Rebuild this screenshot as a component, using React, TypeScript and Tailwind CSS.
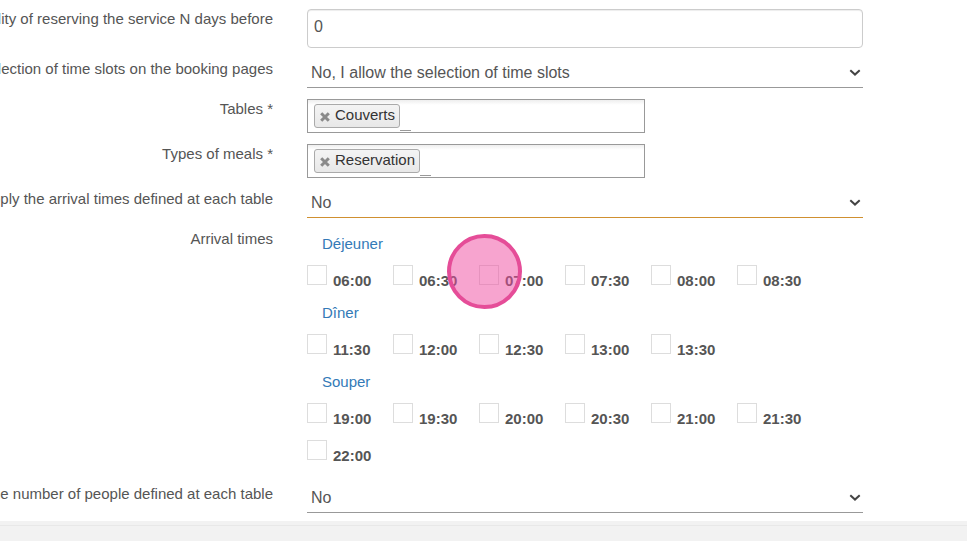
import { useId, type ReactNode } from "react";
import { clsx } from "clsx";

const MEALS = [
  { name: "Déjeuner", times: ["06:00", "06:30", "07:00", "07:30", "08:00", "08:30"] },
  { name: "Dîner", times: ["11:30", "12:00", "12:30", "13:00", "13:30"] },
  { name: "Souper", times: ["19:00", "19:30", "20:00", "20:30", "21:00", "21:30", "22:00"] },
];

const POINTER_TIME = "07:00";

interface RowProps {
  label: string;
  htmlFor?: string;
  children: ReactNode;
}

function Row({ label, htmlFor, children }: RowProps) {
  return (
    <div className="flex items-start gap-[34px]">
      <div className="flex w-[273px] shrink-0 justify-end overflow-hidden pt-px">
        <label htmlFor={htmlFor} className="shrink-0 whitespace-nowrap">
          {label}
        </label>
      </div>
      <div className="min-w-0 flex-1">{children}</div>
    </div>
  );
}

interface SelectRowProps {
  label: string;
  options: string[];
  highlighted?: boolean;
}

function SelectRow({ label, options, highlighted = false }: SelectRowProps) {
  const id = useId();

  return (
    <Row label={label} htmlFor={id}>
      <div className="relative">
        <select
          id={id}
          className="block h-[29px] w-full appearance-none bg-white px-1 text-base leading-5 outline-none"
        >
          {options.map((option) => (
            <option key={option}>{option}</option>
          ))}
        </select>
        <div className={clsx("h-px", highlighted ? "bg-[#d09030]" : "bg-[#999]")} />
        <svg
          viewBox="0 0 12 8"
          className="pointer-events-none absolute top-[11px] right-0.5 h-2 w-3"
          fill="none"
          stroke="#444"
          strokeWidth="2"
          aria-hidden="true"
        >
          <path d="M1.3 1.3 6 5.6l4.7-4.3" />
        </svg>
      </div>
    </Row>
  );
}

function TagRow({ label, tag }: { label: string; tag: string }) {
  const id = useId();

  return (
    <Row label={label} htmlFor={id}>
      <div className="mt-px flex h-[34px] w-[338px] items-start border border-[#999] bg-linear-to-b from-[#eee] to-white to-15% px-1.5 pt-1">
        <span className="flex h-6 items-center rounded-[3px] border border-[#aaa] bg-linear-to-b from-[#f4f4f4] to-[#e8e8e8] pr-1 pb-[3px] pl-[5px] text-[#333]">
          <button type="button" aria-label={`Remove ${tag}`} className="mt-1 mr-[5px]">
            <svg viewBox="0 0 10 10" className="size-2.5" stroke="#8a8a8a" strokeWidth="3" aria-hidden="true">
              <path d="m1.2 1.2 7.6 7.6M8.8 1.2 1.2 8.8" />
            </svg>
          </button>
          {tag}
        </span>
        <input id={id} type="text" className="h-[27px] w-[11px] border-b border-[#999] bg-transparent outline-none" />
      </div>
    </Row>
  );
}

function TimeOption({ meal, time }: { meal: string; time: string }) {
  return (
    <label className="relative flex h-[37px] w-[86px] items-start gap-1.5 pt-[5px] font-bold">
      <input
        type="checkbox"
        name={meal}
        value={time}
        className="size-5 shrink-0 appearance-none border border-[#ddd] bg-white checked:bg-[#337ab7]"
      />
      <span className="mt-1.5">{time}</span>
      {time === POINTER_TIME && (
        <span className="pointer-events-none absolute -top-[26px] -left-8 z-10 size-[75px] rounded-full border-4 border-[#e54d98] bg-[#ef499f]/50" />
      )}
    </label>
  );
}

export default function App() {
  const daysId = useId();

  return (
    <div className="overflow-hidden bg-[#f2f2f2] font-['Liberation_Sans',Arial,sans-serif] text-[15px] leading-5 text-[#555]">
      <form className="flex flex-col gap-2.5 bg-white pt-2 pr-[104px] pb-2">
        <Row label="Possibility of reserving the service N days before" htmlFor={daysId}>
          <input
            id={daysId}
            type="text"
            defaultValue="0"
            className="mt-px block h-[39px] w-full rounded border border-[#ccc] px-1.5 pb-1 text-base leading-5 shadow-[inset_0_1px_1px_rgba(0,0,0,0.075)] outline-none"
          />
        </Row>
        <SelectRow
          label="Disable the selection of time slots on the booking pages"
          options={["No, I allow the selection of time slots", "Yes"]}
        />
        <TagRow label="Tables *" tag="Couverts" />
        <TagRow label="Types of meals *" tag="Reservation" />
        <SelectRow label="Apply the arrival times defined at each table" options={["No", "Yes"]} highlighted />
        <Row label="Arrival times">
          <div className="pb-px">
            {MEALS.map((meal) => (
              <fieldset key={meal.name}>
                <legend className="py-1.5 pl-[15px]">
                  <a href="#" className="text-[#337ab7]">
                    {meal.name}
                  </a>
                </legend>
                <div className="flex flex-wrap">
                  {meal.times.map((time) => (
                    <TimeOption key={time} meal={meal.name} time={time} />
                  ))}
                </div>
              </fieldset>
            ))}
          </div>
        </Row>
        <SelectRow label="Apply the number of people defined at each table" options={["No", "Yes"]} />
      </form>
      <div className="h-5 pt-1">
        <hr className="border-[#e8e8e8]" />
      </div>
    </div>
  );
}
